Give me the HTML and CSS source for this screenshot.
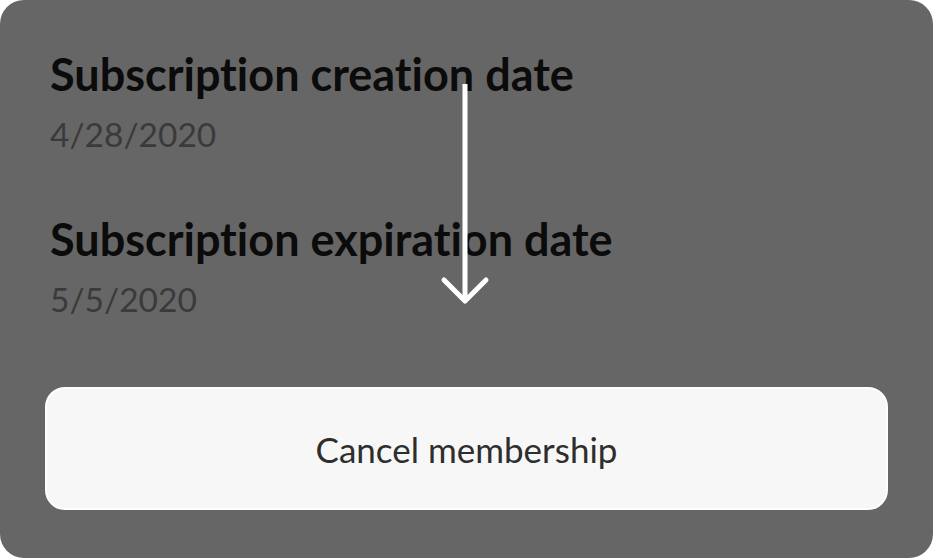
FILE: index.html
```html
<!DOCTYPE html>
<html lang="en">
<head>
    <meta charset="UTF-8">
    <meta name="viewport" content="width=device-width, initial-scale=1.0">
    <title>Subscription</title>
    <link rel="stylesheet" href="styles.css">
</head>
<body>
    <div class="sheet">
        <div class="field">
            <h2>Subscription creation date</h2>
            <p class="value">4/28/2020</p>
        </div>
        <div class="field">
            <h2>Subscription expiration date</h2>
            <p class="value">5/5/2020</p>
        </div>
        <button class="cancel-btn">Cancel membership</button>

        <svg class="scroll-arrow" width="50" height="224" viewBox="0 0 50 224">
            <line x1="25" y1="0" x2="25" y2="216" stroke="#fff" stroke-width="5"/>
            <polyline points="4,196 25,217 46,196" fill="none" stroke="#fff" stroke-width="5" stroke-linecap="round" stroke-linejoin="round"/>
        </svg>
    </div>
</body>
</html>
```

FILE: styles.css
```css
body {
    margin: 0;
    background: #fff;
    font-family: Lato, "Open Sans", sans-serif;
    font-variant-ligatures: none;
}
.sheet {
    position: relative;
    display: flex;
    flex-direction: column;
    gap: 59px;
    height: 558px;
    box-sizing: border-box;
    background-color: #666666;
    border-radius: 24px;
    padding: 48px 45px 0 45px;
    overflow: hidden;
}
.field {
    padding-left: 5px;
}
.field h2 {
    margin: 0;
    font-size: 45px;
    font-weight: 700;
    color: #0b0b0b;
    line-height: 52px;
}
.value {
    margin: 14px 0 0;
    font-size: 33.5px;
    color: #3a3a3a;
    line-height: 40px;
}
.cancel-btn {
    display: block;
    width: 100%;
    height: 123px;
    margin-top: 9px;
    background-color: #f7f7f7;
    border: 2px solid #fff;
    border-radius: 20px;
    font-family: Lato, "Open Sans", sans-serif;
    font-size: 35px;
    color: #2e2e2e;
}
.scroll-arrow {
    position: absolute;
    left: 440px;
    top: 84px;
}
```
